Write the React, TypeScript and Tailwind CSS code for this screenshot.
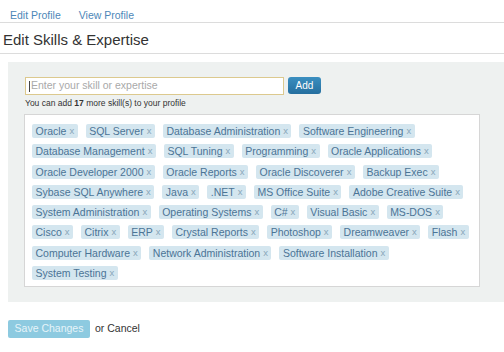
import React from "react";

const rows: string[][] = [
  ["Oracle", "SQL Server", "Database Administration", "Software Engineering"],
  ["Database Management", "SQL Tuning", "Programming", "Oracle Applications"],
  ["Oracle Developer 2000", "Oracle Reports", "Oracle Discoverer", "Backup Exec"],
  ["Sybase SQL Anywhere", "Java", ".NET", "MS Office Suite", "Adobe Creative Suite"],
  ["System Administration", "Operating Systems", "C#", "Visual Basic", "MS-DOS"],
  ["Cisco", "Citrix", "ERP", "Crystal Reports", "Photoshop", "Dreamweaver", "Flash"],
  ["Computer Hardware", "Network Administration", "Software Installation"],
  ["System Testing"],
];

function Tag({ label }: { label: string }) {
  return (
    <span className="flex h-[14px] items-center rounded-[2px] bg-[#d4e6ef] px-[3.5px] text-[10.5px] leading-[14px] text-[#4b7496] whitespace-nowrap">
      {label}
      <span className="ml-[3px] text-[9.5px] text-[#8aa7ba]">x</span>
    </span>
  );
}

export default function App() {
  return (
    <div
      className="w-[504px] h-[352px] overflow-hidden bg-white text-[#333]"
      style={{ fontFamily: '"Liberation Sans", Arial, sans-serif' }}
    >
      <div className="flex gap-[18px] border-b border-[#dcdcdc] pl-[10px] pt-[9px] pb-[1px] text-[10.5px] leading-[12px] text-[#4d87b8]">
        <span>Edit Profile</span>
        <span>View Profile</span>
      </div>
      <div className="border-b border-[#dcdcdc] pl-[3px] pt-[8px] pb-[4px] text-[15px] leading-[18px] text-[#333]">
        Edit Skills &amp; Expertise
      </div>
      <div className="ml-[8px] mt-[8px] bg-[#eef1f0] pl-[16px] pt-[15px] pb-[15px]">
        <div className="flex items-start gap-[4px] pl-[1px]">
          <div className="flex h-[18px] w-[259px] items-center border border-[#dcc98e] bg-white pl-[3px] text-[10.5px] text-[#a9a9a9]">
            <span className="mr-[1px] inline-block h-[11px] w-px bg-[#444]" />
            Enter your skill or expertise
          </div>
          <div className="flex h-[17px] w-[33px] items-center justify-center rounded-[3px] bg-gradient-to-b from-[#3b8fc0] to-[#256f9f] text-[10px] text-white">
            Add
          </div>
        </div>
        <div className="mt-[3px] pl-[1px] text-[8.5px] leading-[10px] text-[#333]">
          You can add <b>17</b> more skill(s) to your profile
        </div>
        <div className="mt-[6px] w-[456px] border border-[#d6d6d6] bg-white pl-[7px] pt-[9px] pb-[6px]">
          <div className="flex flex-col gap-[6.3px]">
            {rows.map((row, i) => (
              <div key={i} className="flex gap-[8px]">
                {row.map((t) => (
                  <Tag key={t} label={t} />
                ))}
              </div>
            ))}
          </div>
        </div>
      </div>
      <div className="ml-[8px] mt-[18px] flex items-center gap-[5px]">
        <div className="flex h-[18px] w-[82px] items-center justify-center rounded-[2px] bg-[#8dcae0] text-[10.5px] text-[#e6f4f9]">
          Save Changes
        </div>
        <span className="text-[10.5px] text-[#333]">or Cancel</span>
      </div>
    </div>
  );
}
